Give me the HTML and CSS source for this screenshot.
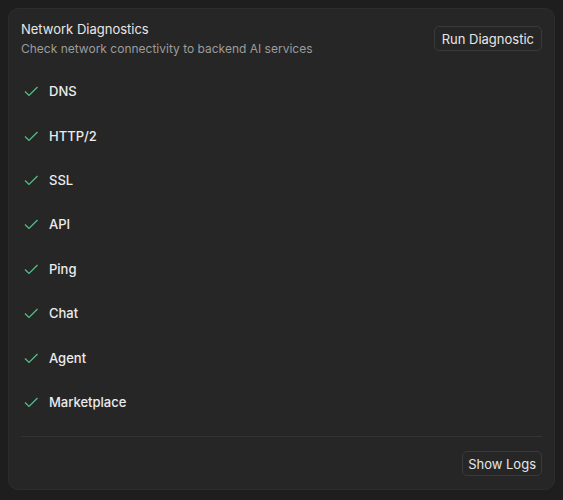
FILE: index.html
```html
<!DOCTYPE html>
<html lang="en">
<head>
    <meta charset="UTF-8">
    <title>Network Diagnostics</title>
    <link rel="stylesheet" href="styles.css">
</head>
<body>
    <div class="card">
        <div class="card-header">
            <div>
                <div class="title">Network Diagnostics</div>
                <div class="subtitle">Check network connectivity to backend AI services</div>
            </div>
            <button class="btn">Run Diagnostic</button>
        </div>

        <ul class="checks">
            <li><svg class="check" viewBox="0 0 16 16"><path d="M2 8.5L6 12.5L14.5 4"/></svg>DNS</li>
            <li><svg class="check" viewBox="0 0 16 16"><path d="M2 8.5L6 12.5L14.5 4"/></svg>HTTP/2</li>
            <li><svg class="check" viewBox="0 0 16 16"><path d="M2 8.5L6 12.5L14.5 4"/></svg>SSL</li>
            <li><svg class="check" viewBox="0 0 16 16"><path d="M2 8.5L6 12.5L14.5 4"/></svg>API</li>
            <li><svg class="check" viewBox="0 0 16 16"><path d="M2 8.5L6 12.5L14.5 4"/></svg>Ping</li>
            <li><svg class="check" viewBox="0 0 16 16"><path d="M2 8.5L6 12.5L14.5 4"/></svg>Chat</li>
            <li><svg class="check" viewBox="0 0 16 16"><path d="M2 8.5L6 12.5L14.5 4"/></svg>Agent</li>
            <li><svg class="check" viewBox="0 0 16 16"><path d="M2 8.5L6 12.5L14.5 4"/></svg>Marketplace</li>
        </ul>

        <div class="card-footer">
            <button class="btn">Show Logs</button>
        </div>
    </div>
</body>
</html>
```

FILE: styles.css
```css
body {
    margin: 0;
    padding: 8px;
    background-color: #1e1e1e;
    font-family: Inter, "Noto Sans", sans-serif;
    font-size: 13px;
    color: #e6e6e6;
}

.card {
    box-sizing: border-box;
    height: 482px;
    background-color: #262626;
    border: 1px solid #2d2d2d;
    border-radius: 10px;
    padding: 11px 12px 12px;
}

.card-header {
    display: flex;
    justify-content: space-between;
    align-items: flex-start;
}

.title {
    line-height: 19px;
    color: #e8e8e8;
}

.subtitle {
    font-size: 12px;
    line-height: 19px;
    color: #9c9c9c;
}

.btn {
    font-family: inherit;
    font-size: 13px;
    color: #e6e6e6;
    background-color: #262626;
    border: 1px solid #3a3a3a;
    border-radius: 5px;
    height: 25px;
    padding: 0 7px;
    margin-top: 6px;
}

.checks {
    list-style: none;
    margin: 11px 0 0;
    padding: 0;
}

.checks li {
    display: flex;
    align-items: center;
    height: 44.4px;
    padding-left: 2px;
    font-weight: 500;
    color: #ececec;
}

.check {
    width: 16px;
    height: 16px;
    margin-right: 10px;
    fill: none;
    stroke: #4fc58a;
    stroke-width: 1.2;
}

.card-footer {
    margin-top: 12px;
    border-top: 1px solid #333;
    padding-top: 14px;
    display: flex;
    justify-content: flex-end;
}

.card-footer .btn {
    margin-top: 0;
    padding: 0 5px;
}
```
